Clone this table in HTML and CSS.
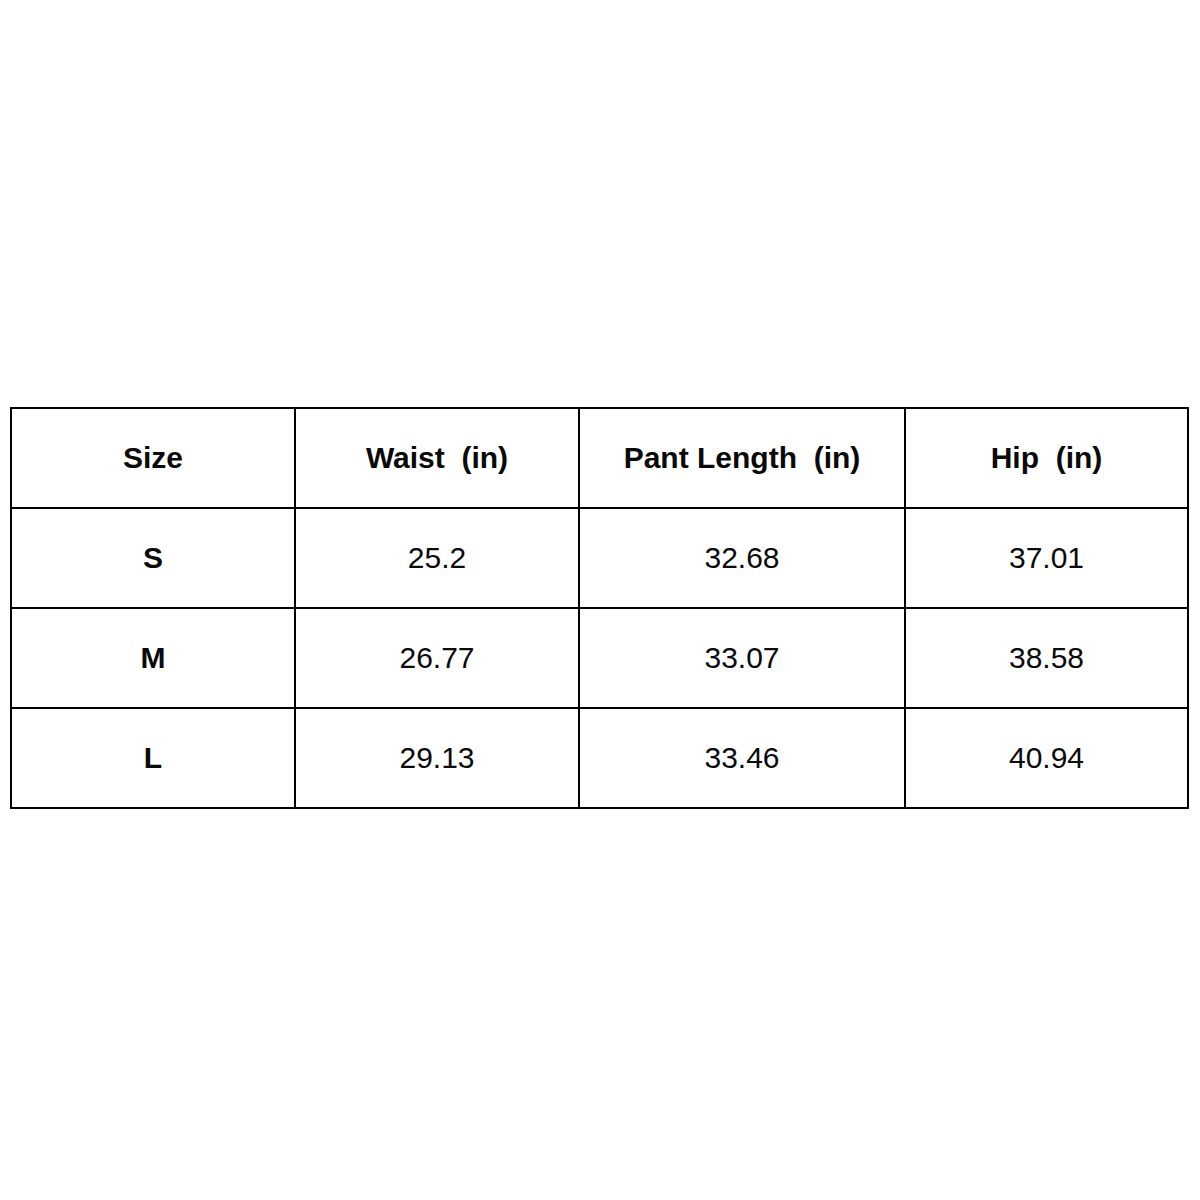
FILE: index.html
```html
<!DOCTYPE html>
<html lang="en">
<head>
<meta charset="utf-8">
<title>Size Chart</title>
<link rel="stylesheet" href="styles.css">
</head>
<body>
<div class="page">
  <div class="chart">
    <div class="cell head">Size</div>
    <div class="cell head">Waist&nbsp; (in)</div>
    <div class="cell head">Pant Length&nbsp; (in)</div>
    <div class="cell head">Hip&nbsp; (in)</div>

    <div class="cell head">S</div>
    <div class="cell">25.2</div>
    <div class="cell">32.68</div>
    <div class="cell">37.01</div>

    <div class="cell head">M</div>
    <div class="cell">26.77</div>
    <div class="cell">33.07</div>
    <div class="cell">38.58</div>

    <div class="cell head">L</div>
    <div class="cell">29.13</div>
    <div class="cell">33.46</div>
    <div class="cell">40.94</div>
  </div>
</div>
</body>
</html>
```

FILE: styles.css
```css
* {
  box-sizing: border-box;
}

html, body {
  margin: 0;
  padding: 0;
  background: #ffffff;
}

.page {
  width: 1200px;
  height: 1200px;
  padding-top: 407px;
  padding-left: 10px;
}

.chart {
  display: grid;
  grid-template-columns: 286px 284px 326px 283px;
  grid-template-rows: 102px 100px 100px 100px;
  width: 1179px;
  font-family: "Liberation Sans", Arial, sans-serif;
  font-size: 30px;
  color: #0a0a0a;
}

.cell {
  display: flex;
  align-items: center;
  justify-content: center;
  border-right: 2px solid #000000;
  border-bottom: 2px solid #000000;
  white-space: nowrap;
}

.cell:nth-child(4n+1) {
  border-left: 2px solid #000000;
}

.cell:nth-child(-n+4) {
  border-top: 2px solid #000000;
}

.head {
  font-weight: bold;
}
```
